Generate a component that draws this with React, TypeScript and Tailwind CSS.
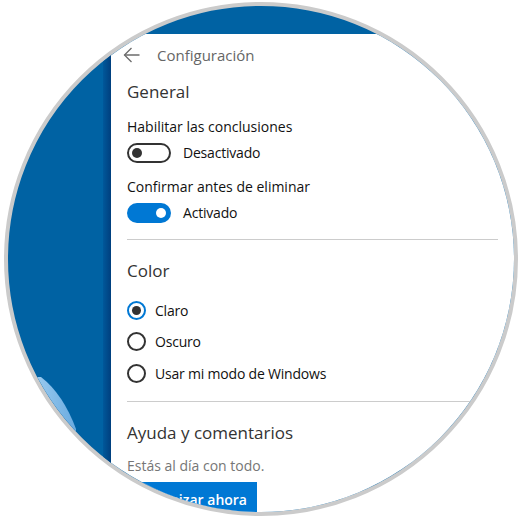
import { useState } from "react";

const Toggle = ({ on }: { on: boolean }) => (
    <div className={on
        ? "flex items-center justify-end w-[44px] h-[20px] rounded-full bg-[#0078d4] pr-[5px]"
        : "flex items-center justify-start w-[44px] h-[20px] rounded-full border-2 border-[#333] pl-[3px]"}>
        <span className={on ? "size-[10px] rounded-full bg-white" : "size-[10px] rounded-full bg-[#333]"} />
    </div>
);

const Radio = ({ checked, label, className }: { checked: boolean; label: string; className: string }) => (
    <div className={`flex items-center h-[20px] ${className}`}>
        <span className={checked
            ? "flex items-center justify-center size-[19px] rounded-full border-2 border-[#0078d4]"
            : "flex items-center justify-center size-[19px] rounded-full border-2 border-[#333]"}>
            {checked && <span className="size-[9px] rounded-full bg-[#333]" />}
        </span>
        <span className="ml-[9px] text-[14px] tracking-[-0.2px] text-[#111]">{label}</span>
    </div>
);

const App = () => {
    const [theme] = useState("Claro");

    return (
        <div className="w-[520px] h-[520px] bg-white" style={{ fontFamily: '"Open Sans", "Noto Sans", sans-serif' }}>
            <div className="ml-[4px] mt-[2px] w-[514px] h-[514px] rounded-full border-4 border-[#cbcbcb] overflow-hidden bg-[#0062a3] flex flex-col">
                <div className="h-[28px] shrink-0" />
                <div className="flex flex-1 min-h-0">
                    <div className="w-[95px] shrink-0 pt-[340px] pl-[20px]">
                        <svg width="50" height="60" viewBox="0 0 50 60">
                            <defs>
                                <linearGradient id="g" x1="0" y1="0" x2="1" y2="0">
                                    <stop offset="0" stopColor="#a3d0f2" />
                                    <stop offset="1" stopColor="#6aabe0" />
                                </linearGradient>
                            </defs>
                            <path d="M13 3 Q35 20 48 55 L48 60 L0 60 L0 3 Z" fill="url(#g)" />
                        </svg>
                    </div>
                    <div className="w-[8px] shrink-0 mt-[1px] bg-gradient-to-r from-[#00589a] to-[#003f7e]" />
                    <div className="flex-1 flex flex-col">
                        <div className="h-[2px] bg-[#003f7e]" />
                        <section className="flex-1 bg-white pl-[16px] pr-4">
                            <div className="h-[42px] flex items-center -ml-[4px]">
                                <svg width="17" height="16" viewBox="0 0 17 16" fill="none" stroke="#6b6b6b" strokeWidth="1.3">
                                    <path d="M1.5 8 H16.5" />
                                    <path d="M8.5 1 L1.5 8 L8.5 15" />
                                </svg>
                                <span className="ml-[17px] text-[15px] text-[#666]">Configuración</span>
                            </div>
                            <h2 className="mt-[2px] h-[28px] leading-[28px] text-[17px] text-[#333]">General</h2>

                            <p className="mt-[11px] h-[20px] leading-[20px] text-[14px] text-[#111]">Habilitar las conclusiones</p>
                            <div className="mt-[5px] flex items-center gap-[12px]">
                                <Toggle on={false} />
                                <span className="text-[14px] tracking-[-0.2px] text-[#111]">Desactivado</span>
                            </div>

                            <p className="mt-[14px] h-[20px] leading-[20px] text-[14px] text-[#111]">Confirmar antes de eliminar</p>
                            <div className="mt-[5px] flex items-center gap-[12px]">
                                <Toggle on={true} />
                                <span className="text-[14px] tracking-[-0.2px] text-[#111]">Activado</span>
                            </div>

                            <div className="mt-[16px] h-px bg-[#cccccc]" />

                            <h2 className="mt-[17px] h-[28px] leading-[28px] text-[17px] text-[#333]">Color</h2>
                            <Radio checked={theme === "Claro"} label="Claro" className="mt-[15px]" />
                            <Radio checked={theme === "Oscuro"} label="Oscuro" className="mt-[11px]" />
                            <Radio checked={theme === "Windows"} label="Usar mi modo de Windows" className="mt-[12px]" />

                            <div className="mt-[18px] h-px bg-[#cccccc]" />

                            <h2 className="mt-[17px] h-[28px] leading-[28px] text-[17px] text-[#333]">Ayuda y comentarios</h2>
                            <p className="mt-[9px] h-[20px] leading-[20px] text-[14px] text-[#767676]">Estás al día con todo.</p>
                            <button className="mt-[6px] w-[130px] h-[34px] bg-[#0078d4] flex items-center justify-end pr-[10px] text-white text-[14px] font-semibold whitespace-nowrap">
                                Sincronizar ahora
                            </button>
                        </section>
                    </div>
                </div>
            </div>
        </div>
    );
};

export default App;
